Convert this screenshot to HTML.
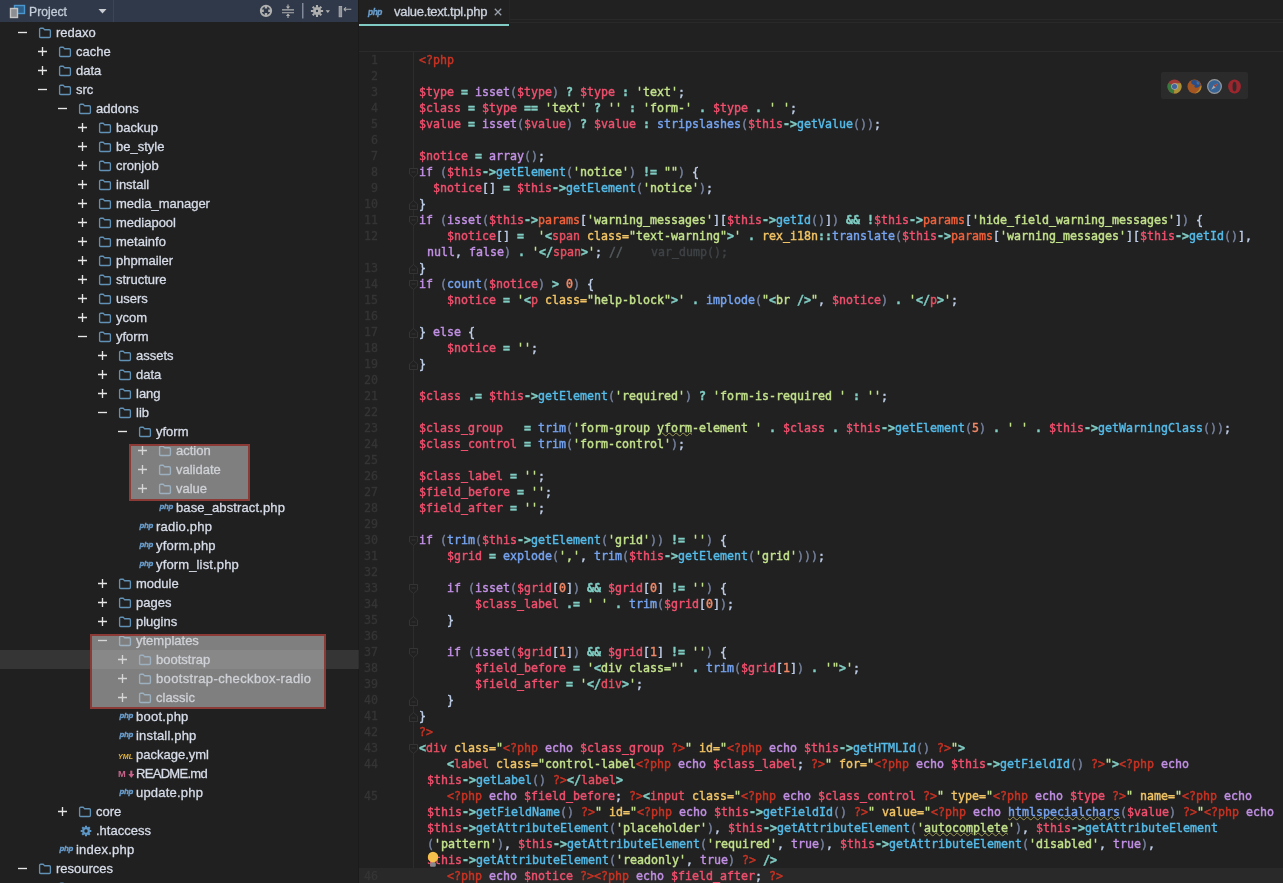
<!DOCTYPE html>
<html lang="en">
<head>
<meta charset="utf-8">
<title>value.text.tpl.php</title>
<style>
*{box-sizing:border-box;margin:0;padding:0}
html,body{width:1283px;height:883px;overflow:hidden;background:#212121}
body{position:relative;font-family:"Liberation Sans",sans-serif;color:#d3dae6}
/* ---------- sidebar ---------- */
#side{position:absolute;left:0;top:0;width:358px;height:883px;background:#202020;overflow:hidden}
#hdr{position:absolute;left:0;top:0;width:358px;height:22px;background:#2f3949}
#hdr .sep0{position:absolute;left:113px;top:0;width:1px;height:22px;background:#3a4556}
#hdr .title{will-change:transform;position:absolute;left:29px;top:4px;font-size:12.2px;line-height:16px;color:#c3ccd8;-webkit-text-stroke:0.3px}
#hdr svg{position:absolute}
#tree{will-change:transform;position:absolute;left:0;top:23px;width:358px}
.tr{position:relative;height:19px;width:358px}
.tr.sel{background:#353535}
.tr .nm{position:absolute;top:1px;font-size:13px;line-height:17px;white-space:nowrap;color:#d6dce8;-webkit-text-stroke:0.3px}
.tg{position:absolute;top:4px;width:11px;height:11px}
.ic{position:absolute;top:0;height:19px}
.ic .fi{position:absolute;left:0;top:4px}
.ic .gear{top:4px;left:1px}
.ic.php{margin-left:1.5px;font-size:7.8px;line-height:19px;font-weight:bold;color:#6a9fcf;letter-spacing:-0.3px;top:-1px;-webkit-text-stroke:0.35px}
.ic.yml{font-size:7px;line-height:19px;font-weight:bold;color:#e6b840;letter-spacing:0.15px;top:2px;margin-left:1px}
.ic.md{font-size:9.3px;line-height:19px;font-weight:bold;color:#c4648a;letter-spacing:-0.5px;top:1px}
.ic.md svg{position:absolute;left:9.5px;top:5px}
.hl{position:absolute;background:rgba(200,200,200,.57);border:2px solid #8c3a35}
/* ---------- editor ---------- */
#split{position:absolute;left:358px;top:0;width:1px;height:883px;background:#1b1b1b}
#selx{position:absolute;left:358px;top:650px;width:1px;height:19px;background:#2e2e2e}
#tabs{will-change:transform;position:absolute;left:359px;top:0;width:924px;height:26px;background:#212121}
#tabs .tab{position:absolute;left:0;top:0;width:150px;height:26px;border-bottom:2px solid #80cbc4}
#tabs .tabline{position:absolute;left:151px;top:19px;right:0;height:4px;border-top:1px solid #292929;border-bottom:1px solid #292929}
#tabs .tabsep{position:absolute;left:150px;top:0;width:1px;height:24px;background:#262626}
#tabs .php{position:absolute;left:9px;top:4px;font-size:8.3px;line-height:16px;font-weight:bold;color:#6a9fcf;letter-spacing:-0.4px;-webkit-text-stroke:0.35px}
#tabs .name{position:absolute;left:35px;top:4px;font-size:13px;line-height:16px;color:#ccd3de;white-space:nowrap;letter-spacing:-0.29px;-webkit-text-stroke:0.3px}
#tabs .x{position:absolute;left:135px;top:7.5px;width:8px;height:8px}
#edtop{position:absolute;left:359px;top:51px;width:924px;height:1px;background:#2b2b2b}
#gline{position:absolute;left:413px;top:52px;width:1px;height:831px;background:#2d2d2d}
#ed{will-change:transform;position:absolute;left:359px;top:52px;width:924px;height:831px;overflow:hidden;
 font-family:"DejaVu Sans Mono","Liberation Mono",monospace;font-size:11.63px;line-height:16px}
.row{position:relative;height:16px;white-space:pre}
.row.cur{background:#292929}
.row.cont .code{left:61px}
.ln{position:absolute;left:0;top:0;width:19px;text-align:right;color:#353535;-webkit-text-stroke:0.3px}
.code{position:absolute;left:60px;top:0;color:#c9d1e0;-webkit-text-stroke:0.4px}
.fold{position:absolute;left:50px;top:4px;width:9px;height:10px}
.v{color:#f0506e}.o{color:#80cdc4;font-weight:bold}.k{color:#c391e6}.s{color:#c3e28c}.f{color:#76a4f0}.m{color:#55bcea}
.pr{color:#f0623c}.n{color:#f38a68}.p{color:#77839f}.b{color:#bfcee8}.t{color:#cc3323}.cl{color:#f2c465}
.a{color:#f2c465}.g{color:#e84f62}.c{color:#555b5f}.c2{color:#3f4346}
.ty{text-decoration:underline wavy #9c9855;text-decoration-thickness:0.8px;text-underline-offset:0px}
#browsers{position:absolute;left:1161px;top:72px;width:87px;height:27px;background:#2b2b2b;border-radius:2px}
#browsers svg{position:absolute;top:6.7px;opacity:.68}
#bulb{position:absolute;left:426px;top:850px}
</style>
</head>
<body>
<div id="side">
 <div id="hdr">
  <svg style="left:9px;top:4px" width="17" height="15" viewBox="0 0 17 15"><rect x="5.5" y="1.5" width="10" height="8" fill="#2c5f8a" stroke="#4c96cf" stroke-width="1.4"/><rect x="1.5" y="4.5" width="7" height="9" fill="#8a8d92" stroke="#c4c4c4" stroke-width="1.4"/></svg>
  <span class="title">Project</span>
  <svg style="left:98px;top:9px" width="9" height="5" viewBox="0 0 9 5"><path d="M0.5 0H8.5L4.5 4.6Z" fill="#c9ccd2"/></svg>
  <span class="sep0"></span>
  <svg style="left:259px;top:4px" width="14" height="14" viewBox="0 0 14 14"><circle cx="7" cy="6.8" r="5.2" fill="none" stroke="#b0b0b0" stroke-width="1.9"/><path d="M7 1.4V4.6M7 9V12.2M1.6 6.8H4.8M9.2 6.8H12.4" stroke="#b0b0b0" stroke-width="2.4"/></svg>
  <svg style="left:281px;top:4px" width="14" height="15" viewBox="0 0 14 15"><path d="M1 5.9H13M1 8.7H13" stroke="#b0b0b0" stroke-width="1.1"/><path d="M7 0.5V4M7 10.4V14" stroke="#b0b0b0" stroke-width="1.1"/><path d="M4.9 2.4H9.1L7 5.1ZM4.9 12.1H9.1L7 9.4Z" fill="#b0b0b0"/></svg>
  <svg style="left:302px;top:3px" width="2" height="16" viewBox="0 0 2 16"><rect x="0" y="0" width="1.5" height="15.5" fill="#7f8999"/></svg>
  <svg style="left:310px;top:4px" width="22" height="14" viewBox="0 0 22 14"><g stroke="#b0b0b0"><circle cx="7" cy="7" r="2.6" fill="none" stroke-width="2.9"/><path d="M7 0.9V3M7 11V13.1M0.9 7H3M11 7H13.1M2.7 2.7L4.2 4.2M9.8 9.8L11.3 11.3M2.7 11.3L4.2 9.8M9.8 4.2L11.3 2.7" stroke-width="2.1"/></g><path d="M15.6 6.2H20L17.8 9Z" fill="#b0b0b0"/></svg>
  <svg style="left:338px;top:5px" width="15" height="13" viewBox="0 0 15 13"><rect x="1.1" y="1.4" width="2.6" height="10.4" fill="#8f9297" stroke="#b0b0b0" stroke-width="0.8"/><path d="M5.8 4.3H13.3M5.8 4.3L8 2.4M5.8 4.3L8 6.2" fill="none" stroke="#b0b0b0" stroke-width="1.1"/></svg>
 </div>
 <div id="tree">
<div class="tr"><svg class="tg" style="left:17px" viewBox="0 0 11 11"><path d="M1 5.5H10" stroke="#e6e6e6" stroke-width="1.35"/></svg><span class="ic" style="left:38px"><svg class="fi" width="14" height="12" viewBox="0 0 14 12"><path d="M1.6 2.3 Q1.6 1.2 2.7 1.2 H5.2 L6.4 2.7 H11.3 Q12.4 2.7 12.4 3.8 V9.4 Q12.4 10.5 11.3 10.5 H2.7 Q1.6 10.5 1.6 9.4 Z" fill="none" stroke="#6291b6" stroke-width="1.35" stroke-linejoin="round"/></svg></span><span class="nm" style="left:56px">redaxo</span></div>
<div class="tr"><svg class="tg" style="left:37px" viewBox="0 0 11 11"><path d="M1 5.5H10M5.5 1V10" stroke="#e6e6e6" stroke-width="1.35"/></svg><span class="ic" style="left:58px"><svg class="fi" width="14" height="12" viewBox="0 0 14 12"><path d="M1.6 2.3 Q1.6 1.2 2.7 1.2 H5.2 L6.4 2.7 H11.3 Q12.4 2.7 12.4 3.8 V9.4 Q12.4 10.5 11.3 10.5 H2.7 Q1.6 10.5 1.6 9.4 Z" fill="none" stroke="#6291b6" stroke-width="1.35" stroke-linejoin="round"/></svg></span><span class="nm" style="left:76px">cache</span></div>
<div class="tr"><svg class="tg" style="left:37px" viewBox="0 0 11 11"><path d="M1 5.5H10M5.5 1V10" stroke="#e6e6e6" stroke-width="1.35"/></svg><span class="ic" style="left:58px"><svg class="fi" width="14" height="12" viewBox="0 0 14 12"><path d="M1.6 2.3 Q1.6 1.2 2.7 1.2 H5.2 L6.4 2.7 H11.3 Q12.4 2.7 12.4 3.8 V9.4 Q12.4 10.5 11.3 10.5 H2.7 Q1.6 10.5 1.6 9.4 Z" fill="none" stroke="#6291b6" stroke-width="1.35" stroke-linejoin="round"/></svg></span><span class="nm" style="left:76px">data</span></div>
<div class="tr"><svg class="tg" style="left:37px" viewBox="0 0 11 11"><path d="M1 5.5H10" stroke="#e6e6e6" stroke-width="1.35"/></svg><span class="ic" style="left:58px"><svg class="fi" width="14" height="12" viewBox="0 0 14 12"><path d="M1.6 2.3 Q1.6 1.2 2.7 1.2 H5.2 L6.4 2.7 H11.3 Q12.4 2.7 12.4 3.8 V9.4 Q12.4 10.5 11.3 10.5 H2.7 Q1.6 10.5 1.6 9.4 Z" fill="none" stroke="#6291b6" stroke-width="1.35" stroke-linejoin="round"/></svg></span><span class="nm" style="left:76px">src</span></div>
<div class="tr"><svg class="tg" style="left:57px" viewBox="0 0 11 11"><path d="M1 5.5H10" stroke="#e6e6e6" stroke-width="1.35"/></svg><span class="ic" style="left:78px"><svg class="fi" width="14" height="12" viewBox="0 0 14 12"><path d="M1.6 2.3 Q1.6 1.2 2.7 1.2 H5.2 L6.4 2.7 H11.3 Q12.4 2.7 12.4 3.8 V9.4 Q12.4 10.5 11.3 10.5 H2.7 Q1.6 10.5 1.6 9.4 Z" fill="none" stroke="#6291b6" stroke-width="1.35" stroke-linejoin="round"/></svg></span><span class="nm" style="left:96px">addons</span></div>
<div class="tr"><svg class="tg" style="left:77px" viewBox="0 0 11 11"><path d="M1 5.5H10M5.5 1V10" stroke="#e6e6e6" stroke-width="1.35"/></svg><span class="ic" style="left:98px"><svg class="fi" width="14" height="12" viewBox="0 0 14 12"><path d="M1.6 2.3 Q1.6 1.2 2.7 1.2 H5.2 L6.4 2.7 H11.3 Q12.4 2.7 12.4 3.8 V9.4 Q12.4 10.5 11.3 10.5 H2.7 Q1.6 10.5 1.6 9.4 Z" fill="none" stroke="#6291b6" stroke-width="1.35" stroke-linejoin="round"/></svg></span><span class="nm" style="left:116px">backup</span></div>
<div class="tr"><svg class="tg" style="left:77px" viewBox="0 0 11 11"><path d="M1 5.5H10M5.5 1V10" stroke="#e6e6e6" stroke-width="1.35"/></svg><span class="ic" style="left:98px"><svg class="fi" width="14" height="12" viewBox="0 0 14 12"><path d="M1.6 2.3 Q1.6 1.2 2.7 1.2 H5.2 L6.4 2.7 H11.3 Q12.4 2.7 12.4 3.8 V9.4 Q12.4 10.5 11.3 10.5 H2.7 Q1.6 10.5 1.6 9.4 Z" fill="none" stroke="#6291b6" stroke-width="1.35" stroke-linejoin="round"/></svg></span><span class="nm" style="left:116px">be_style</span></div>
<div class="tr"><svg class="tg" style="left:77px" viewBox="0 0 11 11"><path d="M1 5.5H10M5.5 1V10" stroke="#e6e6e6" stroke-width="1.35"/></svg><span class="ic" style="left:98px"><svg class="fi" width="14" height="12" viewBox="0 0 14 12"><path d="M1.6 2.3 Q1.6 1.2 2.7 1.2 H5.2 L6.4 2.7 H11.3 Q12.4 2.7 12.4 3.8 V9.4 Q12.4 10.5 11.3 10.5 H2.7 Q1.6 10.5 1.6 9.4 Z" fill="none" stroke="#6291b6" stroke-width="1.35" stroke-linejoin="round"/></svg></span><span class="nm" style="left:116px">cronjob</span></div>
<div class="tr"><svg class="tg" style="left:77px" viewBox="0 0 11 11"><path d="M1 5.5H10M5.5 1V10" stroke="#e6e6e6" stroke-width="1.35"/></svg><span class="ic" style="left:98px"><svg class="fi" width="14" height="12" viewBox="0 0 14 12"><path d="M1.6 2.3 Q1.6 1.2 2.7 1.2 H5.2 L6.4 2.7 H11.3 Q12.4 2.7 12.4 3.8 V9.4 Q12.4 10.5 11.3 10.5 H2.7 Q1.6 10.5 1.6 9.4 Z" fill="none" stroke="#6291b6" stroke-width="1.35" stroke-linejoin="round"/></svg></span><span class="nm" style="left:116px">install</span></div>
<div class="tr"><svg class="tg" style="left:77px" viewBox="0 0 11 11"><path d="M1 5.5H10M5.5 1V10" stroke="#e6e6e6" stroke-width="1.35"/></svg><span class="ic" style="left:98px"><svg class="fi" width="14" height="12" viewBox="0 0 14 12"><path d="M1.6 2.3 Q1.6 1.2 2.7 1.2 H5.2 L6.4 2.7 H11.3 Q12.4 2.7 12.4 3.8 V9.4 Q12.4 10.5 11.3 10.5 H2.7 Q1.6 10.5 1.6 9.4 Z" fill="none" stroke="#6291b6" stroke-width="1.35" stroke-linejoin="round"/></svg></span><span class="nm" style="left:116px">media_manager</span></div>
<div class="tr"><svg class="tg" style="left:77px" viewBox="0 0 11 11"><path d="M1 5.5H10M5.5 1V10" stroke="#e6e6e6" stroke-width="1.35"/></svg><span class="ic" style="left:98px"><svg class="fi" width="14" height="12" viewBox="0 0 14 12"><path d="M1.6 2.3 Q1.6 1.2 2.7 1.2 H5.2 L6.4 2.7 H11.3 Q12.4 2.7 12.4 3.8 V9.4 Q12.4 10.5 11.3 10.5 H2.7 Q1.6 10.5 1.6 9.4 Z" fill="none" stroke="#6291b6" stroke-width="1.35" stroke-linejoin="round"/></svg></span><span class="nm" style="left:116px">mediapool</span></div>
<div class="tr"><svg class="tg" style="left:77px" viewBox="0 0 11 11"><path d="M1 5.5H10M5.5 1V10" stroke="#e6e6e6" stroke-width="1.35"/></svg><span class="ic" style="left:98px"><svg class="fi" width="14" height="12" viewBox="0 0 14 12"><path d="M1.6 2.3 Q1.6 1.2 2.7 1.2 H5.2 L6.4 2.7 H11.3 Q12.4 2.7 12.4 3.8 V9.4 Q12.4 10.5 11.3 10.5 H2.7 Q1.6 10.5 1.6 9.4 Z" fill="none" stroke="#6291b6" stroke-width="1.35" stroke-linejoin="round"/></svg></span><span class="nm" style="left:116px">metainfo</span></div>
<div class="tr"><svg class="tg" style="left:77px" viewBox="0 0 11 11"><path d="M1 5.5H10M5.5 1V10" stroke="#e6e6e6" stroke-width="1.35"/></svg><span class="ic" style="left:98px"><svg class="fi" width="14" height="12" viewBox="0 0 14 12"><path d="M1.6 2.3 Q1.6 1.2 2.7 1.2 H5.2 L6.4 2.7 H11.3 Q12.4 2.7 12.4 3.8 V9.4 Q12.4 10.5 11.3 10.5 H2.7 Q1.6 10.5 1.6 9.4 Z" fill="none" stroke="#6291b6" stroke-width="1.35" stroke-linejoin="round"/></svg></span><span class="nm" style="left:116px">phpmailer</span></div>
<div class="tr"><svg class="tg" style="left:77px" viewBox="0 0 11 11"><path d="M1 5.5H10M5.5 1V10" stroke="#e6e6e6" stroke-width="1.35"/></svg><span class="ic" style="left:98px"><svg class="fi" width="14" height="12" viewBox="0 0 14 12"><path d="M1.6 2.3 Q1.6 1.2 2.7 1.2 H5.2 L6.4 2.7 H11.3 Q12.4 2.7 12.4 3.8 V9.4 Q12.4 10.5 11.3 10.5 H2.7 Q1.6 10.5 1.6 9.4 Z" fill="none" stroke="#6291b6" stroke-width="1.35" stroke-linejoin="round"/></svg></span><span class="nm" style="left:116px">structure</span></div>
<div class="tr"><svg class="tg" style="left:77px" viewBox="0 0 11 11"><path d="M1 5.5H10M5.5 1V10" stroke="#e6e6e6" stroke-width="1.35"/></svg><span class="ic" style="left:98px"><svg class="fi" width="14" height="12" viewBox="0 0 14 12"><path d="M1.6 2.3 Q1.6 1.2 2.7 1.2 H5.2 L6.4 2.7 H11.3 Q12.4 2.7 12.4 3.8 V9.4 Q12.4 10.5 11.3 10.5 H2.7 Q1.6 10.5 1.6 9.4 Z" fill="none" stroke="#6291b6" stroke-width="1.35" stroke-linejoin="round"/></svg></span><span class="nm" style="left:116px">users</span></div>
<div class="tr"><svg class="tg" style="left:77px" viewBox="0 0 11 11"><path d="M1 5.5H10M5.5 1V10" stroke="#e6e6e6" stroke-width="1.35"/></svg><span class="ic" style="left:98px"><svg class="fi" width="14" height="12" viewBox="0 0 14 12"><path d="M1.6 2.3 Q1.6 1.2 2.7 1.2 H5.2 L6.4 2.7 H11.3 Q12.4 2.7 12.4 3.8 V9.4 Q12.4 10.5 11.3 10.5 H2.7 Q1.6 10.5 1.6 9.4 Z" fill="none" stroke="#6291b6" stroke-width="1.35" stroke-linejoin="round"/></svg></span><span class="nm" style="left:116px">ycom</span></div>
<div class="tr"><svg class="tg" style="left:77px" viewBox="0 0 11 11"><path d="M1 5.5H10" stroke="#e6e6e6" stroke-width="1.35"/></svg><span class="ic" style="left:98px"><svg class="fi" width="14" height="12" viewBox="0 0 14 12"><path d="M1.6 2.3 Q1.6 1.2 2.7 1.2 H5.2 L6.4 2.7 H11.3 Q12.4 2.7 12.4 3.8 V9.4 Q12.4 10.5 11.3 10.5 H2.7 Q1.6 10.5 1.6 9.4 Z" fill="none" stroke="#6291b6" stroke-width="1.35" stroke-linejoin="round"/></svg></span><span class="nm" style="left:116px">yform</span></div>
<div class="tr"><svg class="tg" style="left:97px" viewBox="0 0 11 11"><path d="M1 5.5H10M5.5 1V10" stroke="#e6e6e6" stroke-width="1.35"/></svg><span class="ic" style="left:118px"><svg class="fi" width="14" height="12" viewBox="0 0 14 12"><path d="M1.6 2.3 Q1.6 1.2 2.7 1.2 H5.2 L6.4 2.7 H11.3 Q12.4 2.7 12.4 3.8 V9.4 Q12.4 10.5 11.3 10.5 H2.7 Q1.6 10.5 1.6 9.4 Z" fill="none" stroke="#6291b6" stroke-width="1.35" stroke-linejoin="round"/></svg></span><span class="nm" style="left:136px">assets</span></div>
<div class="tr"><svg class="tg" style="left:97px" viewBox="0 0 11 11"><path d="M1 5.5H10M5.5 1V10" stroke="#e6e6e6" stroke-width="1.35"/></svg><span class="ic" style="left:118px"><svg class="fi" width="14" height="12" viewBox="0 0 14 12"><path d="M1.6 2.3 Q1.6 1.2 2.7 1.2 H5.2 L6.4 2.7 H11.3 Q12.4 2.7 12.4 3.8 V9.4 Q12.4 10.5 11.3 10.5 H2.7 Q1.6 10.5 1.6 9.4 Z" fill="none" stroke="#6291b6" stroke-width="1.35" stroke-linejoin="round"/></svg></span><span class="nm" style="left:136px">data</span></div>
<div class="tr"><svg class="tg" style="left:97px" viewBox="0 0 11 11"><path d="M1 5.5H10M5.5 1V10" stroke="#e6e6e6" stroke-width="1.35"/></svg><span class="ic" style="left:118px"><svg class="fi" width="14" height="12" viewBox="0 0 14 12"><path d="M1.6 2.3 Q1.6 1.2 2.7 1.2 H5.2 L6.4 2.7 H11.3 Q12.4 2.7 12.4 3.8 V9.4 Q12.4 10.5 11.3 10.5 H2.7 Q1.6 10.5 1.6 9.4 Z" fill="none" stroke="#6291b6" stroke-width="1.35" stroke-linejoin="round"/></svg></span><span class="nm" style="left:136px">lang</span></div>
<div class="tr"><svg class="tg" style="left:97px" viewBox="0 0 11 11"><path d="M1 5.5H10" stroke="#e6e6e6" stroke-width="1.35"/></svg><span class="ic" style="left:118px"><svg class="fi" width="14" height="12" viewBox="0 0 14 12"><path d="M1.6 2.3 Q1.6 1.2 2.7 1.2 H5.2 L6.4 2.7 H11.3 Q12.4 2.7 12.4 3.8 V9.4 Q12.4 10.5 11.3 10.5 H2.7 Q1.6 10.5 1.6 9.4 Z" fill="none" stroke="#6291b6" stroke-width="1.35" stroke-linejoin="round"/></svg></span><span class="nm" style="left:136px">lib</span></div>
<div class="tr"><svg class="tg" style="left:117px" viewBox="0 0 11 11"><path d="M1 5.5H10" stroke="#e6e6e6" stroke-width="1.35"/></svg><span class="ic" style="left:138px"><svg class="fi" width="14" height="12" viewBox="0 0 14 12"><path d="M1.6 2.3 Q1.6 1.2 2.7 1.2 H5.2 L6.4 2.7 H11.3 Q12.4 2.7 12.4 3.8 V9.4 Q12.4 10.5 11.3 10.5 H2.7 Q1.6 10.5 1.6 9.4 Z" fill="none" stroke="#6291b6" stroke-width="1.35" stroke-linejoin="round"/></svg></span><span class="nm" style="left:156px">yform</span></div>
<div class="tr"><svg class="tg" style="left:137px" viewBox="0 0 11 11"><path d="M1 5.5H10M5.5 1V10" stroke="#e6e6e6" stroke-width="1.35"/></svg><span class="ic" style="left:158px"><svg class="fi" width="14" height="12" viewBox="0 0 14 12"><path d="M1.6 2.3 Q1.6 1.2 2.7 1.2 H5.2 L6.4 2.7 H11.3 Q12.4 2.7 12.4 3.8 V9.4 Q12.4 10.5 11.3 10.5 H2.7 Q1.6 10.5 1.6 9.4 Z" fill="none" stroke="#6291b6" stroke-width="1.35" stroke-linejoin="round"/></svg></span><span class="nm" style="left:176px">action</span></div>
<div class="tr"><svg class="tg" style="left:137px" viewBox="0 0 11 11"><path d="M1 5.5H10M5.5 1V10" stroke="#e6e6e6" stroke-width="1.35"/></svg><span class="ic" style="left:158px"><svg class="fi" width="14" height="12" viewBox="0 0 14 12"><path d="M1.6 2.3 Q1.6 1.2 2.7 1.2 H5.2 L6.4 2.7 H11.3 Q12.4 2.7 12.4 3.8 V9.4 Q12.4 10.5 11.3 10.5 H2.7 Q1.6 10.5 1.6 9.4 Z" fill="none" stroke="#6291b6" stroke-width="1.35" stroke-linejoin="round"/></svg></span><span class="nm" style="left:176px">validate</span></div>
<div class="tr"><svg class="tg" style="left:137px" viewBox="0 0 11 11"><path d="M1 5.5H10M5.5 1V10" stroke="#e6e6e6" stroke-width="1.35"/></svg><span class="ic" style="left:158px"><svg class="fi" width="14" height="12" viewBox="0 0 14 12"><path d="M1.6 2.3 Q1.6 1.2 2.7 1.2 H5.2 L6.4 2.7 H11.3 Q12.4 2.7 12.4 3.8 V9.4 Q12.4 10.5 11.3 10.5 H2.7 Q1.6 10.5 1.6 9.4 Z" fill="none" stroke="#6291b6" stroke-width="1.35" stroke-linejoin="round"/></svg></span><span class="nm" style="left:176px">value</span></div>
<div class="tr"><span class="ic php" style="left:158px"><i>php</i></span><span class="nm" style="left:176px;letter-spacing:0.12px">base_abstract.php</span></div>
<div class="tr"><span class="ic php" style="left:138px"><i>php</i></span><span class="nm" style="left:156px;letter-spacing:0.22px">radio.php</span></div>
<div class="tr"><span class="ic php" style="left:138px"><i>php</i></span><span class="nm" style="left:156px;letter-spacing:0.22px">yform.php</span></div>
<div class="tr"><span class="ic php" style="left:138px"><i>php</i></span><span class="nm" style="left:156px;letter-spacing:0.14px">yform_list.php</span></div>
<div class="tr"><svg class="tg" style="left:97px" viewBox="0 0 11 11"><path d="M1 5.5H10M5.5 1V10" stroke="#e6e6e6" stroke-width="1.35"/></svg><span class="ic" style="left:118px"><svg class="fi" width="14" height="12" viewBox="0 0 14 12"><path d="M1.6 2.3 Q1.6 1.2 2.7 1.2 H5.2 L6.4 2.7 H11.3 Q12.4 2.7 12.4 3.8 V9.4 Q12.4 10.5 11.3 10.5 H2.7 Q1.6 10.5 1.6 9.4 Z" fill="none" stroke="#6291b6" stroke-width="1.35" stroke-linejoin="round"/></svg></span><span class="nm" style="left:136px">module</span></div>
<div class="tr"><svg class="tg" style="left:97px" viewBox="0 0 11 11"><path d="M1 5.5H10M5.5 1V10" stroke="#e6e6e6" stroke-width="1.35"/></svg><span class="ic" style="left:118px"><svg class="fi" width="14" height="12" viewBox="0 0 14 12"><path d="M1.6 2.3 Q1.6 1.2 2.7 1.2 H5.2 L6.4 2.7 H11.3 Q12.4 2.7 12.4 3.8 V9.4 Q12.4 10.5 11.3 10.5 H2.7 Q1.6 10.5 1.6 9.4 Z" fill="none" stroke="#6291b6" stroke-width="1.35" stroke-linejoin="round"/></svg></span><span class="nm" style="left:136px">pages</span></div>
<div class="tr"><svg class="tg" style="left:97px" viewBox="0 0 11 11"><path d="M1 5.5H10M5.5 1V10" stroke="#e6e6e6" stroke-width="1.35"/></svg><span class="ic" style="left:118px"><svg class="fi" width="14" height="12" viewBox="0 0 14 12"><path d="M1.6 2.3 Q1.6 1.2 2.7 1.2 H5.2 L6.4 2.7 H11.3 Q12.4 2.7 12.4 3.8 V9.4 Q12.4 10.5 11.3 10.5 H2.7 Q1.6 10.5 1.6 9.4 Z" fill="none" stroke="#6291b6" stroke-width="1.35" stroke-linejoin="round"/></svg></span><span class="nm" style="left:136px">plugins</span></div>
<div class="tr"><svg class="tg" style="left:97px" viewBox="0 0 11 11"><path d="M1 5.5H10" stroke="#e6e6e6" stroke-width="1.35"/></svg><span class="ic" style="left:118px"><svg class="fi" width="14" height="12" viewBox="0 0 14 12"><path d="M1.6 2.3 Q1.6 1.2 2.7 1.2 H5.2 L6.4 2.7 H11.3 Q12.4 2.7 12.4 3.8 V9.4 Q12.4 10.5 11.3 10.5 H2.7 Q1.6 10.5 1.6 9.4 Z" fill="none" stroke="#6291b6" stroke-width="1.35" stroke-linejoin="round"/></svg></span><span class="nm" style="left:136px">ytemplates</span></div>
<div class="tr sel"><svg class="tg" style="left:117px" viewBox="0 0 11 11"><path d="M1 5.5H10M5.5 1V10" stroke="#e6e6e6" stroke-width="1.35"/></svg><span class="ic" style="left:138px"><svg class="fi" width="14" height="12" viewBox="0 0 14 12"><path d="M1.6 2.3 Q1.6 1.2 2.7 1.2 H5.2 L6.4 2.7 H11.3 Q12.4 2.7 12.4 3.8 V9.4 Q12.4 10.5 11.3 10.5 H2.7 Q1.6 10.5 1.6 9.4 Z" fill="none" stroke="#6291b6" stroke-width="1.35" stroke-linejoin="round"/></svg></span><span class="nm" style="left:156px">bootstrap</span></div>
<div class="tr"><svg class="tg" style="left:117px" viewBox="0 0 11 11"><path d="M1 5.5H10M5.5 1V10" stroke="#e6e6e6" stroke-width="1.35"/></svg><span class="ic" style="left:138px"><svg class="fi" width="14" height="12" viewBox="0 0 14 12"><path d="M1.6 2.3 Q1.6 1.2 2.7 1.2 H5.2 L6.4 2.7 H11.3 Q12.4 2.7 12.4 3.8 V9.4 Q12.4 10.5 11.3 10.5 H2.7 Q1.6 10.5 1.6 9.4 Z" fill="none" stroke="#6291b6" stroke-width="1.35" stroke-linejoin="round"/></svg></span><span class="nm" style="left:156px;letter-spacing:0.36px">bootstrap-checkbox-radio</span></div>
<div class="tr"><svg class="tg" style="left:117px" viewBox="0 0 11 11"><path d="M1 5.5H10M5.5 1V10" stroke="#e6e6e6" stroke-width="1.35"/></svg><span class="ic" style="left:138px"><svg class="fi" width="14" height="12" viewBox="0 0 14 12"><path d="M1.6 2.3 Q1.6 1.2 2.7 1.2 H5.2 L6.4 2.7 H11.3 Q12.4 2.7 12.4 3.8 V9.4 Q12.4 10.5 11.3 10.5 H2.7 Q1.6 10.5 1.6 9.4 Z" fill="none" stroke="#6291b6" stroke-width="1.35" stroke-linejoin="round"/></svg></span><span class="nm" style="left:156px">classic</span></div>
<div class="tr"><span class="ic php" style="left:118px"><i>php</i></span><span class="nm" style="left:136px;letter-spacing:0.25px">boot.php</span></div>
<div class="tr"><span class="ic php" style="left:118px"><i>php</i></span><span class="nm" style="left:136px;letter-spacing:0.18px">install.php</span></div>
<div class="tr"><span class="ic yml" style="left:117px"><i>YML</i></span><span class="nm" style="left:136px">package.yml</span></div>
<div class="tr"><span class="ic md" style="left:118px">M<svg width="6.6" height="8.8" viewBox="0 0 6 8"><path d="M3 0.6V5" fill="none" stroke="#c4648a" stroke-width="1.9"/><path d="M0.3 3.6H5.7L3 7.2Z" fill="#c4648a"/></svg></span><span class="nm" style="left:136px;letter-spacing:-0.7px">README.md</span></div>
<div class="tr"><span class="ic php" style="left:118px"><i>php</i></span><span class="nm" style="left:136px;letter-spacing:0.20px">update.php</span></div>
<div class="tr"><svg class="tg" style="left:57px" viewBox="0 0 11 11"><path d="M1 5.5H10M5.5 1V10" stroke="#e6e6e6" stroke-width="1.35"/></svg><span class="ic" style="left:78px"><svg class="fi" width="14" height="12" viewBox="0 0 14 12"><path d="M1.6 2.3 Q1.6 1.2 2.7 1.2 H5.2 L6.4 2.7 H11.3 Q12.4 2.7 12.4 3.8 V9.4 Q12.4 10.5 11.3 10.5 H2.7 Q1.6 10.5 1.6 9.4 Z" fill="none" stroke="#6291b6" stroke-width="1.35" stroke-linejoin="round"/></svg></span><span class="nm" style="left:96px">core</span></div>
<div class="tr"><span class="ic" style="left:79px"><svg class="fi gear" width="12" height="12" viewBox="0 0 14 14"><g fill="none" stroke="#5d97c8"><circle cx="7" cy="7" r="3.3" stroke-width="2.6"/><path d="M7 0.8V3M7 11V13.2M0.8 7H3M11 7H13.2M2.6 2.6L4.2 4.2M9.8 9.8L11.4 11.4M2.6 11.4L4.2 9.8M9.8 4.2L11.4 2.6" stroke-width="2.4"/></g></svg></span><span class="nm" style="left:96px">.htaccess</span></div>
<div class="tr"><span class="ic php" style="left:58px"><i>php</i></span><span class="nm" style="left:76px;letter-spacing:0.22px">index.php</span></div>
<div class="tr"><svg class="tg" style="left:17px" viewBox="0 0 11 11"><path d="M1 5.5H10" stroke="#e6e6e6" stroke-width="1.35"/></svg><span class="ic" style="left:38px"><svg class="fi" width="14" height="12" viewBox="0 0 14 12"><path d="M1.6 2.3 Q1.6 1.2 2.7 1.2 H5.2 L6.4 2.7 H11.3 Q12.4 2.7 12.4 3.8 V9.4 Q12.4 10.5 11.3 10.5 H2.7 Q1.6 10.5 1.6 9.4 Z" fill="none" stroke="#6291b6" stroke-width="1.35" stroke-linejoin="round"/></svg></span><span class="nm" style="left:56px">resources</span></div>
<div class="tr"><svg class="tg" style="left:37px" viewBox="0 0 11 11"><path d="M1 5.5H10M5.5 1V10" stroke="#e6e6e6" stroke-width="1.35"/></svg><span class="ic" style="left:58px"><svg class="fi" width="14" height="12" viewBox="0 0 14 12"><path d="M1.6 2.3 Q1.6 1.2 2.7 1.2 H5.2 L6.4 2.7 H11.3 Q12.4 2.7 12.4 3.8 V9.4 Q12.4 10.5 11.3 10.5 H2.7 Q1.6 10.5 1.6 9.4 Z" fill="none" stroke="#6291b6" stroke-width="1.35" stroke-linejoin="round"/></svg></span><span class="nm" style="left:76px">assets</span></div>
 </div>
 <div class="hl" style="left:129px;top:444px;width:121px;height:57px"></div>
 <div class="hl" style="left:90px;top:634px;width:236px;height:75px"></div>
</div>
<div id="split"></div><div id="selx"></div>
<div id="tabs">
 <div class="tab">
  <span class="php"><i>php</i></span>
  <span class="name">value.text.tpl.php</span>
  <svg class="x" viewBox="0 0 8 8"><path d="M0.8 0.8L7.2 7.2M7.2 0.8L0.8 7.2" stroke="#9aa2ad" stroke-width="1.3"/></svg>
 </div>
 <div class="tabline"></div><div class="tabsep"></div>
</div>
<div id="edtop"></div>
<div id="gline"></div>
<div id="ed">
<div class="row"><span class="ln">1</span><span class="code"><span class="t">&lt;?php</span></span></div>
<div class="row"><span class="ln">2</span><span class="code"></span></div>
<div class="row"><span class="ln">3</span><span class="code"><span class="v">$type</span> <span class="o">=</span> <span class="k">isset</span><span class="p">(</span><span class="v">$type</span><span class="p">)</span> <span class="o">?</span> <span class="v">$type</span> <span class="o">:</span> <span class="s">'text'</span><span class="b">;</span></span></div>
<div class="row"><span class="ln">4</span><span class="code"><span class="v">$class</span> <span class="o">=</span> <span class="v">$type</span> <span class="o">==</span> <span class="s">'text'</span> <span class="o">?</span> <span class="s">''</span> <span class="o">:</span> <span class="s">'form-'</span> <span class="o">.</span> <span class="v">$type</span> <span class="o">.</span> <span class="s">' '</span><span class="b">;</span></span></div>
<div class="row"><span class="ln">5</span><span class="code"><span class="v">$value</span> <span class="o">=</span> <span class="k">isset</span><span class="p">(</span><span class="v">$value</span><span class="p">)</span> <span class="o">?</span> <span class="v">$value</span> <span class="o">:</span> <span class="f">stripslashes</span><span class="p">(</span><span class="v">$this</span><span class="o">-&gt;</span><span class="m">getValue</span><span class="p">(</span><span class="p">)</span><span class="p">)</span><span class="b">;</span></span></div>
<div class="row"><span class="ln">6</span><span class="code"></span></div>
<div class="row"><span class="ln">7</span><span class="code"><span class="v">$notice</span> <span class="o">=</span> <span class="k">array</span><span class="p">(</span><span class="p">)</span><span class="b">;</span></span></div>
<div class="row"><span class="ln">8</span><svg class="fold" viewBox="0 0 9 10"><path d="M0.5 0.5H8.5V6L4.5 9.5L0.5 6Z" fill="#212121" stroke="#343434"/><path d="M2.5 4H6.5" stroke="#343434"/></svg><span class="code"><span class="k">if</span> <span class="p">(</span><span class="v">$this</span><span class="o">-&gt;</span><span class="m">getElement</span><span class="p">(</span><span class="s">'notice'</span><span class="p">)</span> <span class="o">!=</span> <span class="s">""</span><span class="p">)</span> <span class="b">{</span></span></div>
<div class="row"><span class="ln">9</span><span class="code">  <span class="v">$notice</span><span class="b">[</span><span class="b">]</span> <span class="o">=</span> <span class="v">$this</span><span class="o">-&gt;</span><span class="m">getElement</span><span class="p">(</span><span class="s">'notice'</span><span class="p">)</span><span class="b">;</span></span></div>
<div class="row"><span class="ln">10</span><svg class="fold" viewBox="0 0 9 10"><path d="M0.5 9.5H8.5V4L4.5 0.5L0.5 4Z" fill="#212121" stroke="#343434"/><path d="M2.5 6H6.5" stroke="#343434"/></svg><span class="code"><span class="b">}</span></span></div>
<div class="row"><span class="ln">11</span><svg class="fold" viewBox="0 0 9 10"><path d="M0.5 0.5H8.5V6L4.5 9.5L0.5 6Z" fill="#212121" stroke="#343434"/><path d="M2.5 4H6.5" stroke="#343434"/></svg><span class="code"><span class="k">if</span> <span class="p">(</span><span class="k">isset</span><span class="p">(</span><span class="v">$this</span><span class="o">-&gt;</span><span class="pr">params</span><span class="b">[</span><span class="s">'warning_messages'</span><span class="b">]</span><span class="b">[</span><span class="v">$this</span><span class="o">-&gt;</span><span class="m">getId</span><span class="p">(</span><span class="p">)</span><span class="b">]</span><span class="p">)</span> <span class="o">&amp;&amp;</span> <span class="o">!</span><span class="v">$this</span><span class="o">-&gt;</span><span class="pr">params</span><span class="b">[</span><span class="s">'hide_field_warning_messages'</span><span class="b">]</span><span class="p">)</span> <span class="b">{</span></span></div>
<div class="row"><span class="ln">12</span><span class="code">    <span class="v">$notice</span><span class="b">[</span><span class="b">]</span> <span class="o">=</span>  <span class="s">'</span><span class="o">&lt;</span><span class="g">span</span><span class="s"> </span><span class="a">class=</span><span class="s">"text-warning"</span><span class="o">&gt;</span><span class="s">'</span> <span class="o">.</span> <span class="cl">rex_i18n</span><span class="o">::</span><span class="f">translate</span><span class="p">(</span><span class="v">$this</span><span class="o">-&gt;</span><span class="pr">params</span><span class="b">[</span><span class="s">'warning_messages'</span><span class="b">]</span><span class="b">[</span><span class="v">$this</span><span class="o">-&gt;</span><span class="m">getId</span><span class="p">(</span><span class="p">)</span><span class="b">]</span><span class="b">,</span></span></div>
<div class="row cont"><span class="ln"></span><span class="code"> <span class="k">null</span><span class="b">,</span> <span class="k">false</span><span class="p">)</span> <span class="o">.</span> <span class="s">'</span><span class="o">&lt;/</span><span class="g">span</span><span class="o">&gt;</span><span class="s">'</span><span class="b">;</span> <span class="c">//    </span><span class="c2">var_dump();</span></span></div>
<div class="row"><span class="ln">13</span><svg class="fold" viewBox="0 0 9 10"><path d="M0.5 9.5H8.5V4L4.5 0.5L0.5 4Z" fill="#212121" stroke="#343434"/><path d="M2.5 6H6.5" stroke="#343434"/></svg><span class="code"><span class="b">}</span></span></div>
<div class="row"><span class="ln">14</span><svg class="fold" viewBox="0 0 9 10"><path d="M0.5 0.5H8.5V6L4.5 9.5L0.5 6Z" fill="#212121" stroke="#343434"/><path d="M2.5 4H6.5" stroke="#343434"/></svg><span class="code"><span class="k">if</span> <span class="p">(</span><span class="f">count</span><span class="p">(</span><span class="v">$notice</span><span class="p">)</span> <span class="o">&gt;</span> <span class="n">0</span><span class="p">)</span> <span class="b">{</span></span></div>
<div class="row"><span class="ln">15</span><span class="code">    <span class="v">$notice</span> <span class="o">=</span> <span class="s">'</span><span class="o">&lt;</span><span class="g">p</span><span class="s"> </span><span class="a">class=</span><span class="s">"help-block"</span><span class="o">&gt;</span><span class="s">'</span> <span class="o">.</span> <span class="f">implode</span><span class="p">(</span><span class="s">"</span><span class="o">&lt;</span><span class="s">br </span><span class="o">/&gt;</span><span class="s">"</span><span class="b">,</span> <span class="v">$notice</span><span class="p">)</span> <span class="o">.</span> <span class="s">'</span><span class="o">&lt;/</span><span class="g">p</span><span class="o">&gt;</span><span class="s">'</span><span class="b">;</span></span></div>
<div class="row"><span class="ln">16</span><span class="code"></span></div>
<div class="row"><span class="ln">17</span><svg class="fold" viewBox="0 0 9 10"><path d="M0.5 9.5H8.5V4L4.5 0.5L0.5 4Z" fill="#212121" stroke="#343434"/><path d="M2.5 6H6.5" stroke="#343434"/></svg><span class="code"><span class="b">}</span> <span class="k">else</span> <span class="b">{</span></span></div>
<div class="row"><span class="ln">18</span><span class="code">    <span class="v">$notice</span> <span class="o">=</span> <span class="s">''</span><span class="b">;</span></span></div>
<div class="row"><span class="ln">19</span><svg class="fold" viewBox="0 0 9 10"><path d="M0.5 9.5H8.5V4L4.5 0.5L0.5 4Z" fill="#212121" stroke="#343434"/><path d="M2.5 6H6.5" stroke="#343434"/></svg><span class="code"><span class="b">}</span></span></div>
<div class="row"><span class="ln">20</span><span class="code"></span></div>
<div class="row"><span class="ln">21</span><span class="code"><span class="v">$class</span> <span class="o">.=</span> <span class="v">$this</span><span class="o">-&gt;</span><span class="m">getElement</span><span class="p">(</span><span class="s">'required'</span><span class="p">)</span> <span class="o">?</span> <span class="s">'form-is-required '</span> <span class="o">:</span> <span class="s">''</span><span class="b">;</span></span></div>
<div class="row"><span class="ln">22</span><span class="code"></span></div>
<div class="row"><span class="ln">23</span><span class="code"><span class="v">$class_group</span>   <span class="o">=</span> <span class="f">trim</span><span class="p">(</span><span class="s">'form-group <span class="ty">yform</span>-element '</span> <span class="o">.</span> <span class="v">$class</span> <span class="o">.</span> <span class="v">$this</span><span class="o">-&gt;</span><span class="m">getElement</span><span class="p">(</span><span class="n">5</span><span class="p">)</span> <span class="o">.</span> <span class="s">' '</span> <span class="o">.</span> <span class="v">$this</span><span class="o">-&gt;</span><span class="m">getWarningClass</span><span class="p">(</span><span class="p">)</span><span class="p">)</span><span class="b">;</span></span></div>
<div class="row"><span class="ln">24</span><span class="code"><span class="v">$class_control</span> <span class="o">=</span> <span class="f">trim</span><span class="p">(</span><span class="s">'form-control'</span><span class="p">)</span><span class="b">;</span></span></div>
<div class="row"><span class="ln">25</span><span class="code"></span></div>
<div class="row"><span class="ln">26</span><span class="code"><span class="v">$class_label</span> <span class="o">=</span> <span class="s">''</span><span class="b">;</span></span></div>
<div class="row"><span class="ln">27</span><span class="code"><span class="v">$field_before</span> <span class="o">=</span> <span class="s">''</span><span class="b">;</span></span></div>
<div class="row"><span class="ln">28</span><span class="code"><span class="v">$field_after</span> <span class="o">=</span> <span class="s">''</span><span class="b">;</span></span></div>
<div class="row"><span class="ln">29</span><span class="code"></span></div>
<div class="row"><span class="ln">30</span><svg class="fold" viewBox="0 0 9 10"><path d="M0.5 0.5H8.5V6L4.5 9.5L0.5 6Z" fill="#212121" stroke="#343434"/><path d="M2.5 4H6.5" stroke="#343434"/></svg><span class="code"><span class="k">if</span> <span class="p">(</span><span class="f">trim</span><span class="p">(</span><span class="v">$this</span><span class="o">-&gt;</span><span class="m">getElement</span><span class="p">(</span><span class="s">'grid'</span><span class="p">)</span><span class="p">)</span> <span class="o">!=</span> <span class="s">''</span><span class="p">)</span> <span class="b">{</span></span></div>
<div class="row"><span class="ln">31</span><span class="code">    <span class="v">$grid</span> <span class="o">=</span> <span class="f">explode</span><span class="p">(</span><span class="s">','</span><span class="b">,</span> <span class="f">trim</span><span class="p">(</span><span class="v">$this</span><span class="o">-&gt;</span><span class="m">getElement</span><span class="p">(</span><span class="s">'grid'</span><span class="p">)</span><span class="p">)</span><span class="p">)</span><span class="b">;</span></span></div>
<div class="row"><span class="ln">32</span><span class="code"></span></div>
<div class="row"><span class="ln">33</span><svg class="fold" viewBox="0 0 9 10"><path d="M0.5 0.5H8.5V6L4.5 9.5L0.5 6Z" fill="#212121" stroke="#343434"/><path d="M2.5 4H6.5" stroke="#343434"/></svg><span class="code">    <span class="k">if</span> <span class="p">(</span><span class="k">isset</span><span class="p">(</span><span class="v">$grid</span><span class="b">[</span><span class="n">0</span><span class="b">]</span><span class="p">)</span> <span class="o">&amp;&amp;</span> <span class="v">$grid</span><span class="b">[</span><span class="n">0</span><span class="b">]</span> <span class="o">!=</span> <span class="s">''</span><span class="p">)</span> <span class="b">{</span></span></div>
<div class="row"><span class="ln">34</span><span class="code">        <span class="v">$class_label</span> <span class="o">.=</span> <span class="s">' '</span> <span class="o">.</span> <span class="f">trim</span><span class="p">(</span><span class="v">$grid</span><span class="b">[</span><span class="n">0</span><span class="b">]</span><span class="p">)</span><span class="b">;</span></span></div>
<div class="row"><span class="ln">35</span><svg class="fold" viewBox="0 0 9 10"><path d="M0.5 9.5H8.5V4L4.5 0.5L0.5 4Z" fill="#212121" stroke="#343434"/><path d="M2.5 6H6.5" stroke="#343434"/></svg><span class="code">    <span class="b">}</span></span></div>
<div class="row"><span class="ln">36</span><span class="code"></span></div>
<div class="row"><span class="ln">37</span><svg class="fold" viewBox="0 0 9 10"><path d="M0.5 0.5H8.5V6L4.5 9.5L0.5 6Z" fill="#212121" stroke="#343434"/><path d="M2.5 4H6.5" stroke="#343434"/></svg><span class="code">    <span class="k">if</span> <span class="p">(</span><span class="k">isset</span><span class="p">(</span><span class="v">$grid</span><span class="b">[</span><span class="n">1</span><span class="b">]</span><span class="p">)</span> <span class="o">&amp;&amp;</span> <span class="v">$grid</span><span class="b">[</span><span class="n">1</span><span class="b">]</span> <span class="o">!=</span> <span class="s">''</span><span class="p">)</span> <span class="b">{</span></span></div>
<div class="row"><span class="ln">38</span><span class="code">        <span class="v">$field_before</span> <span class="o">=</span> <span class="s">'</span><span class="o">&lt;</span><span class="s">div class="</span><span class="s">'</span> <span class="o">.</span> <span class="f">trim</span><span class="p">(</span><span class="v">$grid</span><span class="b">[</span><span class="n">1</span><span class="b">]</span><span class="p">)</span> <span class="o">.</span> <span class="s">'"</span><span class="o">&gt;</span><span class="s">'</span><span class="b">;</span></span></div>
<div class="row"><span class="ln">39</span><span class="code">        <span class="v">$field_after</span> <span class="o">=</span> <span class="s">'</span><span class="o">&lt;/</span><span class="g">div</span><span class="o">&gt;</span><span class="s">'</span><span class="b">;</span></span></div>
<div class="row"><span class="ln">40</span><svg class="fold" viewBox="0 0 9 10"><path d="M0.5 9.5H8.5V4L4.5 0.5L0.5 4Z" fill="#212121" stroke="#343434"/><path d="M2.5 6H6.5" stroke="#343434"/></svg><span class="code">    <span class="b">}</span></span></div>
<div class="row"><span class="ln">41</span><svg class="fold" viewBox="0 0 9 10"><path d="M0.5 9.5H8.5V4L4.5 0.5L0.5 4Z" fill="#212121" stroke="#343434"/><path d="M2.5 6H6.5" stroke="#343434"/></svg><span class="code"><span class="b">}</span></span></div>
<div class="row"><span class="ln">42</span><span class="code"><span class="t">?&gt;</span></span></div>
<div class="row"><span class="ln">43</span><svg class="fold" viewBox="0 0 9 10"><path d="M0.5 0.5H8.5V6L4.5 9.5L0.5 6Z" fill="#212121" stroke="#343434"/><path d="M2.5 4H6.5" stroke="#343434"/></svg><span class="code"><span class="o">&lt;</span><span class="g">div</span> <span class="a">class=</span><span class="s">"</span><span class="t">&lt;?php</span> <span class="k">echo</span> <span class="v">$class_group</span> <span class="t">?&gt;</span><span class="s">"</span> <span class="a">id=</span><span class="s">"</span><span class="t">&lt;?php</span> <span class="k">echo</span> <span class="v">$this</span><span class="o">-&gt;</span><span class="m">getHTMLId</span><span class="p">(</span><span class="p">)</span> <span class="t">?&gt;</span><span class="s">"</span><span class="o">&gt;</span></span></div>
<div class="row"><span class="ln">44</span><span class="code">    <span class="o">&lt;</span><span class="g">label</span> <span class="a">class=</span><span class="s">"</span><span class="s">control-label</span><span class="t">&lt;?php</span> <span class="k">echo</span> <span class="v">$class_label</span><span class="b">;</span> <span class="t">?&gt;</span><span class="s">"</span> <span class="a">for=</span><span class="s">"</span><span class="t">&lt;?php</span> <span class="k">echo</span> <span class="v">$this</span><span class="o">-&gt;</span><span class="m">getFieldId</span><span class="p">(</span><span class="p">)</span> <span class="t">?&gt;</span><span class="s">"</span><span class="o">&gt;</span><span class="t">&lt;?php</span> <span class="k">echo</span></span></div>
<div class="row cont"><span class="ln"></span><span class="code"> <span class="v">$this</span><span class="o">-&gt;</span><span class="m">getLabel</span><span class="p">(</span><span class="p">)</span> <span class="t">?&gt;</span><span class="o">&lt;/</span><span class="g">label</span><span class="o">&gt;</span></span></div>
<div class="row"><span class="ln">45</span><span class="code">    <span class="t">&lt;?php</span> <span class="k">echo</span> <span class="v">$field_before</span><span class="b">;</span> <span class="t">?&gt;</span><span class="o">&lt;</span><span class="g">input</span> <span class="a">class=</span><span class="s">"</span><span class="t">&lt;?php</span> <span class="k">echo</span> <span class="v">$class_control</span> <span class="t">?&gt;</span><span class="s">"</span> <span class="a">type=</span><span class="s">"</span><span class="t">&lt;?php</span> <span class="k">echo</span> <span class="v">$type</span> <span class="t">?&gt;</span><span class="s">"</span> <span class="a">name=</span><span class="s">"</span><span class="t">&lt;?php</span> <span class="k">echo</span></span></div>
<div class="row cont"><span class="ln"></span><span class="code"> <span class="v">$this</span><span class="o">-&gt;</span><span class="m">getFieldName</span><span class="p">(</span><span class="p">)</span> <span class="t">?&gt;</span><span class="s">"</span> <span class="a">id=</span><span class="s">"</span><span class="t">&lt;?php</span> <span class="k">echo</span> <span class="v">$this</span><span class="o">-&gt;</span><span class="m">getFieldId</span><span class="p">(</span><span class="p">)</span> <span class="t">?&gt;</span><span class="s">"</span> <span class="a">value=</span><span class="s">"</span><span class="t">&lt;?php</span> <span class="k">echo</span> <span class="f ty">htmlspecialchars</span><span class="p">(</span><span class="v">$value</span><span class="p">)</span> <span class="t">?&gt;</span><span class="s">"</span><span class="t">&lt;?php</span> <span class="k">echo</span></span></div>
<div class="row cont"><span class="ln"></span><span class="code"> <span class="v">$this</span><span class="o">-&gt;</span><span class="m">getAttributeElement</span><span class="p">(</span><span class="s">'placeholder'</span><span class="p">)</span><span class="b">,</span> <span class="v">$this</span><span class="o">-&gt;</span><span class="m">getAttributeElement</span><span class="p">(</span><span class="s">'<span class="ty">autocomplete</span>'</span><span class="p">)</span><span class="b">,</span> <span class="v">$this</span><span class="o">-&gt;</span><span class="m">getAttributeElement</span></span></div>
<div class="row cont"><span class="ln"></span><span class="code"> <span class="p">(</span><span class="s">'pattern'</span><span class="p">)</span><span class="b">,</span> <span class="v">$this</span><span class="o">-&gt;</span><span class="m">getAttributeElement</span><span class="p">(</span><span class="s">'required'</span><span class="b">,</span> <span class="k">true</span><span class="p">)</span><span class="b">,</span> <span class="v">$this</span><span class="o">-&gt;</span><span class="m">getAttributeElement</span><span class="p">(</span><span class="s">'disabled'</span><span class="b">,</span> <span class="k">true</span><span class="p">)</span><span class="b">,</span></span></div>
<div class="row cont"><span class="ln"></span><span class="code"> <span class="v">$this</span><span class="o">-&gt;</span><span class="m">getAttributeElement</span><span class="p">(</span><span class="s">'readonly'</span><span class="b">,</span> <span class="k">true</span><span class="p">)</span> <span class="t">?&gt;</span> <span class="o">/&gt;</span></span></div>
<div class="row cur"><span class="ln">46</span><span class="code">    <span class="t">&lt;?php</span> <span class="k">echo</span> <span class="v">$notice</span> <span class="t">?&gt;</span><span class="t">&lt;?php</span> <span class="k">echo</span> <span class="v">$field_after</span><span class="b">;</span> <span class="t">?&gt;</span></span></div>
</div>
<div id="browsers">
 <svg style="left:6.3px" width="15" height="15" viewBox="0 0 16 16"><circle cx="8" cy="8" r="7.5" fill="#d8433a"/><path d="M8 8L1.5 4.3A7.5 7.5 0 0 0 7.4 15.5Z" fill="#3f9f4a"/><path d="M8 8L7.4 15.5A7.5 7.5 0 0 0 14.7 4.6L8 4.6Z" fill="#e8c23c"/><circle cx="8" cy="8" r="3.5" fill="#e8e8e8"/><circle cx="8" cy="8" r="2.7" fill="#4a7fd0"/></svg>
 <svg style="left:26px" width="15" height="15" viewBox="0 0 16 16"><circle cx="8" cy="8" r="7.5" fill="#dd6a1e"/><path d="M5 1.6A7 7 0 0 1 14.6 6.2C13.6 8.2 11.5 9.6 9.4 9.2C7.6 8.8 7.4 7.2 8.6 6.4C7 6.4 5.4 5.6 4.6 4.2C4.4 3.2 4.6 2.2 5 1.6Z" fill="#2b5cb0"/><path d="M10.5 2.2A6 6 0 0 1 13.6 5.4C12.6 6.4 11 6.2 10.4 5C10 4 10 3 10.5 2.2Z" fill="#4a8fd8"/><path d="M15.4 7C15.8 11.5 12.5 15.5 8 15.5C11 14 13.4 11.5 13.8 8.6C14.4 8.2 15 7.6 15.4 7Z" fill="#f2b630"/></svg>
 <svg style="left:46px" width="15" height="15" viewBox="0 0 16 16"><circle cx="8" cy="8" r="7.3" fill="#3f7fc8" stroke="#c9cdd2" stroke-width="1.3"/><path d="M11.5 4.5L9 9L4.5 11.5L7 7Z" fill="#e6e6e6"/><path d="M11.5 4.5L9 9L7 7Z" fill="#d9473f"/></svg>
 <svg style="left:66px" width="15" height="15" viewBox="0 0 16 16"><ellipse cx="8" cy="8" rx="6.8" ry="7.5" fill="#d0242f"/><ellipse cx="8" cy="8" rx="2.1" ry="5.2" fill="#3a2a2c"/></svg>
</div>
<svg id="bulb" width="14" height="18" viewBox="0 0 14 18"><circle cx="7" cy="7" r="5.2" fill="#f4bf4a"/><path d="M4.8 10.5H9.2V12.6H4.8Z" fill="#f4bf4a"/><rect x="4.2" y="12.5" width="5.6" height="4.3" rx="1.2" fill="#85898f"/></svg>
</body>
</html>
